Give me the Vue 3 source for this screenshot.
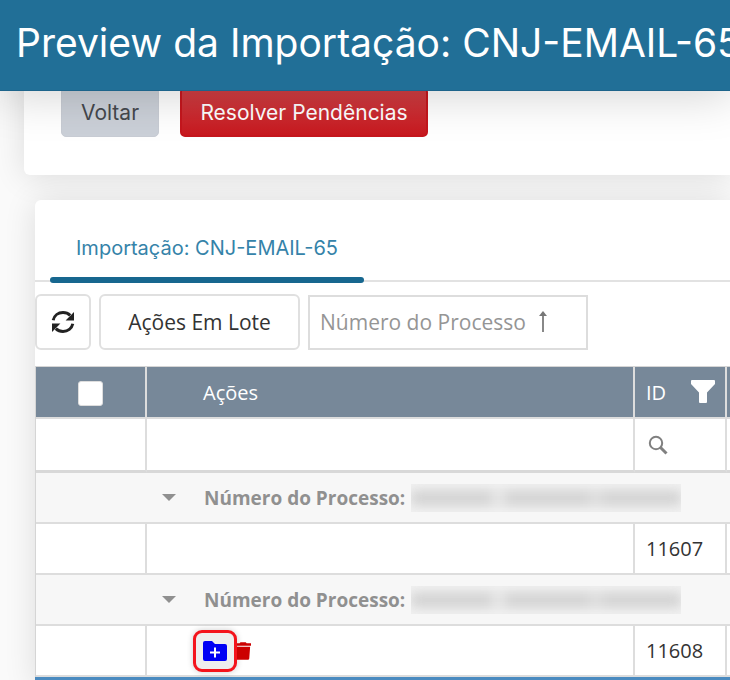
<!-- src/views/ImportPreview.vue -->
<template>
  <div class="page">
    <header class="page-header">
      <h1 class="page-title">Preview da Importação: CNJ-EMAIL-65</h1>
    </header>

    <section class="card actions-card">
      <button type="button" class="btn btn-back">Voltar</button>
      <button type="button" class="btn btn-resolve">Resolver Pendências</button>
    </section>

    <section class="card grid-card">
      <nav class="tabs">
        <a href="#importacao" class="tab">Importação: CNJ-EMAIL-65</a>
      </nav>

      <div class="toolbar">
        <button
            type="button"
            class="tool-button refresh-button"
            aria-label="Atualizar"
            @click="expandAll"
        >
          <svg class="refresh-icon" viewBox="0 0 24 24">
            <path d="M2.2 10.2C3.2 5.6 7.2 2.6 12 2.6c2.9 0 5.3 1 7.2 2.8" />
            <path d="M21.8 13.8C20.8 18.4 16.8 21.4 12 21.4c-2.9 0-5.3-1-7.2-2.8" />
            <polygon points="23,2 23,10.4 14.6,10.4" />
            <polygon points="1,22 1,13.6 9.4,13.6" />
          </svg>
        </button>
        <button type="button" class="tool-button batch-button">Ações Em Lote</button>
        <button type="button" class="group-chip" @click="ascending = !ascending">
          Número do Processo
          <svg class="sort-icon" :class="{ descending: !ascending }" viewBox="0 0 10 22">
            <path d="M5 21V2" />
            <polygon points="5,0 9,5 1,5" />
          </svg>
        </button>
      </div>

      <table class="grid">
        <colgroup>
          <col class="col-select" />
          <col />
          <col class="col-id" />
          <col class="col-next" />
        </colgroup>
        <thead>
          <tr class="head-row">
            <th class="select-cell">
              <input
                  v-model="allSelected"
                  type="checkbox"
                  class="select-all"
                  aria-label="Selecionar todos"
              />
            </th>
            <th class="actions-cell">Ações</th>
            <th class="id-cell">
              <div class="id-head">
                ID
                <svg class="filter-icon" viewBox="0 0 24 24">
                  <path d="M1 0h22a1 1 0 0 1 1 1v3l-8 8.500v9.500a1 1 0 0 1-1 1H9a1 1 0 0 1-1-1v-9.500L0 4V1a1 1 0 0 1 1-1z" />
                </svg>
              </div>
            </th>
            <th></th>
          </tr>
          <tr class="filter-row">
            <td></td>
            <td></td>
            <td class="id-cell">
              <svg class="search-icon" viewBox="0 0 20 20">
                <circle cx="8" cy="8" r="6.200" />
                <path class="handle" d="M12.500 12.500L18.500 18.500" />
              </svg>
            </td>
            <td></td>
          </tr>
        </thead>
        <tbody v-for="group in sortedGroups" :key="group.id">
          <tr class="group-row" @click="group.open = !group.open">
            <td colspan="4">
              <div class="group-label">
                <span class="caret" :class="{ closed: !group.open }"></span>
                <span>Número do Processo:</span>
                <span class="masked"><span class="masked-ink"></span></span>
              </div>
            </td>
          </tr>
          <tr v-if="group.open" class="data-row">
            <td></td>
            <td class="actions-cell">
              <div v-if="group.canCreate" class="row-actions">
                <button type="button" class="icon-button create-button" aria-label="Criar pasta">
                  <svg class="folder-icon" viewBox="0 0 24 20">
                    <path class="folder" d="M2 0h7l3 3h10a2 2 0 0 1 2 2v13a2 2 0 0 1-2 2H2a2 2 0 0 1-2-2V2a2 2 0 0 1 2-2z" />
                    <path class="plus" d="M12 6.500v10M7 11.500h10" />
                  </svg>
                </button>
                <button type="button" class="icon-button" aria-label="Excluir">
                  <svg class="trash-icon" viewBox="0 0 16 20">
                    <path d="M0 1h3l1-1h6l1 1h5v3H0zM0 5h15l-1 13.500a1.600 1.600 0 0 1-1.600 1.500H0z" />
                  </svg>
                </button>
              </div>
            </td>
            <td class="id-cell">{{ group.id }}</td>
            <td></td>
          </tr>
        </tbody>
      </table>
      <div class="grid-end"></div>
    </section>
  </div>
</template>

<script setup>
import { ref, computed } from 'vue'

// ─── STATE ────────────────────────────────────────────────────────────────────
const allSelected = ref(false)
const ascending = ref(true)
const groups = ref([
  { id: 11607, open: true, canCreate: false },
  { id: 11608, open: true, canCreate: true },
])

const sortedGroups = computed(() =>
    ascending.value ? groups.value : [...groups.value].reverse()
)

// ─── HANDLERS ─────────────────────────────────────────────────────────────────
function expandAll() {
  groups.value.forEach((group) => {
    group.open = true
  })
}
</script>

<style>
body {
  margin: 0;
  background: #fafafa;
}
</style>

<style scoped>
.page {
  height: 100vh;
  overflow: hidden;
  font-family: 'Open Sans', 'Noto Sans', sans-serif;
  font-size: 20px;
  color: #333;
}

.page *,
.page *::before,
.page *::after {
  box-sizing: border-box;
}

button {
  font-family: inherit;
  cursor: pointer;
}

/* ─── HEADER ────────────────────────────────────────────────────────────────── */
.page-header {
  position: relative;
  z-index: 1;
  height: 91px;
  padding: 0 16px;
  background: #216f97;
  border-bottom: 1px solid #1d648b;
  box-shadow: 0 0 48px 4px rgba(0, 0, 0, 0.18);
}

.page-title {
  margin: 0;
  font-family: Inter, sans-serif;
  font-size: 39px;
  font-weight: 400;
  line-height: 86px;
  color: #fff;
  white-space: nowrap;
}

/* ─── CARDS ─────────────────────────────────────────────────────────────────── */
.card {
  background: #fff;
  box-shadow: 0 2px 32px rgba(0, 0, 0, 0.12);
}

.actions-card {
  display: flex;
  gap: 21px;
  margin: -20px 0 0 24px;
  padding: 16px 37px 38px;
  border-bottom-left-radius: 6px;
}

.grid-card {
  margin: 25px 0 0 35px;
  border-top-left-radius: 6px;
}

.btn {
  height: 50px;
  padding: 0 16px;
  border-radius: 5px;
  font-family: Inter, sans-serif;
  font-size: 21px;
}

.btn-back {
  min-width: 98px;
  border: 1px solid #c8ccd4;
  background: #cbd0d8;
  color: #45484d;
}

.btn-resolve {
  min-width: 248px;
  border: 2px solid #c5161d;
  background: linear-gradient(#d04045, #c8191f);
  color: #fff;
}

/* ─── TABS ──────────────────────────────────────────────────────────────────── */
.tabs {
  display: flex;
  height: 83px;
  padding-left: 15px;
  background: linear-gradient(#e2e2e2, #e2e2e2) 0 80px / 100% 2px no-repeat;
}

.tab {
  position: relative;
  min-width: 314px;
  padding: 0 24px;
  font-family: Inter, sans-serif;
  font-size: 20px;
  line-height: 96px;
  text-align: center;
  text-decoration: none;
  white-space: nowrap;
  color: #3583a9;
}

.tab::after {
  content: '';
  position: absolute;
  right: 0;
  bottom: 0;
  left: 0;
  height: 6px;
  border-radius: 3px;
  background: #17678f;
}

/* ─── TOOLBAR ───────────────────────────────────────────────────────────────── */
.toolbar {
  display: flex;
  align-items: center;
  gap: 8px;
  padding: 11px 0 16px;
}

.tool-button {
  height: 56px;
  border: 2px solid #e0e0e0;
  border-radius: 6px;
  background: #fff;
  font-size: 21px;
  color: #333;
}

.refresh-button {
  display: flex;
  align-items: center;
  justify-content: center;
  width: 56px;
  padding: 0;
}

.refresh-icon {
  width: 24px;
  height: 24px;
  fill: #222;
}

.refresh-icon path {
  fill: none;
  stroke: #222;
  stroke-width: 3;
}

.batch-button {
  min-width: 201px;
}

.group-chip {
  display: flex;
  align-items: center;
  gap: 12px;
  min-width: 280px;
  height: 55px;
  padding: 0 10px;
  border: 2px solid #ddd;
  background: #fff;
  font-size: 21px;
  color: #959595;
}

.sort-icon {
  width: 10px;
  height: 22px;
  fill: #777;
}

.sort-icon path {
  stroke: #888;
  stroke-width: 2;
}

.sort-icon.descending {
  transform: rotate(180deg);
}

/* ─── GRID ──────────────────────────────────────────────────────────────────── */
.grid {
  width: 100%;
  table-layout: fixed;
  border-collapse: separate;
  border-spacing: 0;
  border-top: 1px solid #d5d5d5;
  border-left: 1px solid #d5d5d5;
}

.col-select {
  width: 111px;
}

.col-id {
  width: 92px;
}

.col-next {
  width: 3px;
}

.grid th,
.grid td {
  height: 51px;
  padding: 0;
  border-right: 2px solid #ddd;
  border-bottom: 2px solid #ddd;
  text-align: left;
}

.grid th:last-child,
.grid td:last-child {
  border-right: 0;
}

.grid .head-row th {
  height: 52px;
  background: #778899;
  font-weight: 400;
  color: #fff;
}

.grid .filter-row td {
  height: 54px;
  border-bottom: 3px solid #d8d8d8;
}

.grid th.actions-cell {
  padding-left: 56px;
}

.grid td.actions-cell {
  padding-left: 46px;
}

.grid .id-cell {
  padding-left: 11px;
}

.grid .select-cell {
  text-align: center;
}

.select-all {
  appearance: none;
  width: 25px;
  height: 25px;
  margin: 0;
  border: 1px solid #ddd;
  border-radius: 3px;
  background: #fff;
  vertical-align: middle;
}

.select-all:checked {
  background: #216f97;
}

.id-head {
  display: flex;
  align-items: center;
  justify-content: space-between;
  padding-right: 10px;
}

.filter-icon {
  width: 24px;
  height: 24px;
  fill: #fff;
}

.search-icon {
  display: block;
  width: 20px;
  height: 20px;
  margin-left: 2px;
  fill: none;
  stroke: #808080;
  stroke-width: 2;
}

.search-icon .handle {
  stroke-width: 3;
}

.grid .group-row td {
  background: #f7f7f7;
  font-size: 19px;
  font-weight: 700;
  color: #909090;
}

.group-label {
  display: flex;
  align-items: center;
  padding-left: 126px;
  white-space: nowrap;
}

.caret {
  margin-right: 28px;
  border-top: 7px solid #909090;
  border-right: 7px solid transparent;
  border-left: 7px solid transparent;
}

.caret.closed {
  transform: rotate(-90deg);
}

.masked {
  width: 270px;
  height: 28px;
  margin-left: 6px;
  padding: 7px 0;
  overflow: hidden;
  background: #f1f1f1;
}

.masked-ink {
  display: block;
  height: 14px;
  background: linear-gradient(
    90deg,
    #d0d0d0 0 30%,
    #e4e4e4 30% 35%,
    #d0d0d0 35% 66%,
    #dadada 66% 71%,
    #d0d0d0 71% 100%
  );
  filter: blur(6px);
}

.row-actions {
  display: flex;
  align-items: center;
}

.icon-button {
  padding: 0;
  border: 0;
  background: none;
}

.create-button {
  display: flex;
  align-items: center;
  justify-content: center;
  width: 44px;
  height: 42px;
  border: 3px solid #f4141c;
  border-radius: 9px;
  background: #eee;
  box-shadow: 0 0 6px rgba(0, 0, 0, 0.2);
}

.folder-icon {
  width: 24px;
  height: 20px;
}

.folder {
  fill: #0000f5;
}

.plus {
  fill: none;
  stroke: #fff;
  stroke-width: 2;
}

.trash-icon {
  display: block;
  width: 14px;
  height: 20px;
  fill: #cc0000;
}

.grid-end {
  height: 8px;
  background: #4b8bc0;
}
</style>
